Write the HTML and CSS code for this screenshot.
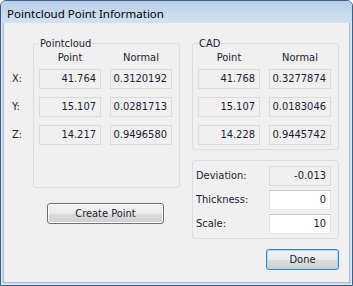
FILE: index.html
```html
<!DOCTYPE html>
<html lang="en">
<head>
  <meta charset="UTF-8" />
  <title>Pointcloud Point Information</title>
  <link rel="stylesheet" href="styles.css">
</head>
<body>
  <div class="window">
    <div class="titlebar">Pointcloud Point Information</div>
    <div class="client">
      <div class="left">
        <div class="axes">
          <span>X:</span>
          <span>Y:</span>
          <span>Z:</span>
        </div>
        <fieldset class="group cloud">
          <legend>Pointcloud</legend>
          <div class="table">
            <span class="head">Point</span>
            <span class="head">Normal</span>
            <span class="field">41.764</span>
            <span class="field">0.3120192</span>
            <span class="field">15.107</span>
            <span class="field">0.0281713</span>
            <span class="field">14.217</span>
            <span class="field">0.9496580</span>
          </div>
        </fieldset>
        <button class="btn create">Create Point</button>
      </div>

      <div class="right">
        <fieldset class="group cad">
          <legend>CAD</legend>
          <div class="table">
            <span class="head">Point</span>
            <span class="head">Normal</span>
            <span class="field">41.768</span>
            <span class="field">0.3277874</span>
            <span class="field">15.107</span>
            <span class="field">0.0183046</span>
            <span class="field">14.228</span>
            <span class="field">0.9445742</span>
          </div>
        </fieldset>

        <div class="params">
          <span class="lbl">Deviation:</span>
          <span class="field">-0.013</span>
          <span class="lbl">Thickness:</span>
          <span class="field edit">0</span>
          <span class="lbl">Scale:</span>
          <span class="field edit">10</span>
        </div>

        <button class="btn done">Done</button>
      </div>
    </div>
  </div>
</body>
</html>
```

FILE: styles.css
```css
body {
  margin: 0;
  font-family: Tahoma, "DejaVu Sans Condensed", "Liberation Sans", sans-serif;
  font-size: 11px;
  color: #1a1a33;
  background: #ffffff;
}

.window {
  width: 353px;
  height: 286px;
  box-sizing: border-box;
  border: 1px solid #3d5f85;
  border-radius: 6px 6px 0 0;
  background: #c4d8ee;
  padding: 0 3px 2px;
  display: flex;
  flex-direction: column;
  box-shadow: inset 0 0 0 1px #dde9f6;
}

.titlebar {
  height: 22px;
  padding: 3px 0 0 6px;
  box-sizing: border-box;
  font-family: "Noto Sans", "Open Sans", sans-serif;
  font-size: 11.5px;
  line-height: 19px;
  color: #000;
  background: linear-gradient(#b9cfe7, #d3e2f2);
  margin: 0 -3px;
  border-radius: 5px 5px 0 0;
}

.client {
  flex: 1;
  background: #f0f0f0;
  display: grid;
  grid-template-columns: 176px 147px;
  column-gap: 12px;
  align-items: start;
  padding: 14px 10px 0 0;
  border: 1px solid #a9bed6;
  border-top: none;
  margin: 0 -1px;
}

.left {
  display: grid;
  grid-template-columns: 29px 147px;
  row-gap: 15px;
}

.axes {
  display: flex;
  flex-direction: column;
  gap: 8px;
  padding: 32px 0 0 8px;
}

.axes span {
  line-height: 20px;
}

.group {
  margin: 0;
  padding: 0 6px 4px 5px;
  min-width: 0;
  border: 1px solid #d5dfe5;
  border-radius: 3px;
}

.group legend {
  padding: 0 1px;
  line-height: 13px;
}

.cloud {
  padding-bottom: 42px;
}

.table {
  display: grid;
  grid-template-columns: 62px 62px;
  column-gap: 9px;
  row-gap: 8px;
}

.head {
  text-align: center;
  line-height: 15px;
  height: 15px;
  margin-bottom: -4px;
}

.field {
  box-sizing: border-box;
  height: 20px;
  line-height: 18px;
  border: 1px solid #dadada;
  background: #f0f0f0;
  text-align: right;
  padding-right: 4px;
}

.field.edit {
  background: #ffffff;
  border-color: #c3c6cd #e0e3e8 #e6e9ee #e0e3e8;
}

.right {
  display: grid;
}

.params {
  margin-top: 10px;
  border: 1px solid #d5dfe5;
  border-radius: 3px;
  padding: 5px 7px 4px 3px;
  display: grid;
  grid-template-columns: 1fr 62px;
  row-gap: 4px;
}

.lbl {
  line-height: 20px;
}

.btn {
  box-sizing: border-box;
  height: 21px;
  padding: 0;
  font: inherit;
  color: #1a1a33;
  border: 1px solid #707070;
  border-radius: 3px;
  background: linear-gradient(#f2f2f2 0%, #ebebeb 50%, #dddddd 51%, #cfcfcf 100%);
  box-shadow: inset 0 0 0 1px #fbfbfb;
}

.create {
  grid-column: 2;
  justify-self: center;
  width: 117px;
  margin-right: 2px;
}

.done {
  justify-self: end;
  width: 73px;
  margin-top: 10px;
  border-color: #3c7fb1;
  box-shadow: inset 0 0 0 1px #9fe3f7;
}
```
